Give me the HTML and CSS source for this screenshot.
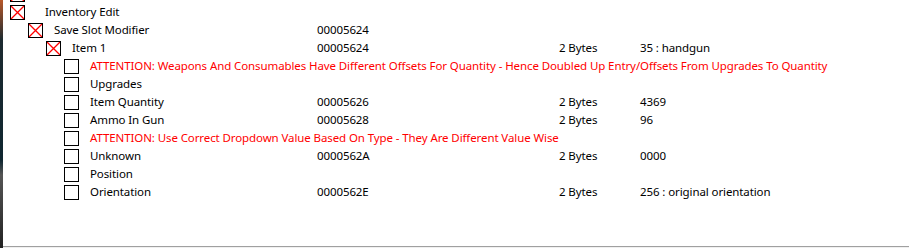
FILE: index.html
```html
<!DOCTYPE html>
<html>
<head>
    <title>Cheat Table</title>
    <link rel="stylesheet" href="styles.css">
</head>
<body>
    <div class="desktop"></div>
    <div class="table">
        <div class="tree">
            <div class="row">
                <div class="desc lvl-0"><span class="box checked"><svg viewBox="0 0 13 13"><path d="M0 0L13 13M13 0L0 13" stroke="#ff0000" stroke-width="1.3" fill="none"/></svg></span></div>
            </div>
            <div class="row">
                <div class="desc lvl-0 wide-gap"><span class="box checked"><svg viewBox="0 0 13 13"><path d="M0 0L13 13M13 0L0 13" stroke="#ff0000" stroke-width="1.3" fill="none"/></svg></span><span>Inventory Edit</span></div>
            </div>
            <div class="row">
                <div class="desc lvl-1"><span class="box checked"><svg viewBox="0 0 13 13"><path d="M0 0L13 13M13 0L0 13" stroke="#ff0000" stroke-width="1.3" fill="none"/></svg></span><span>Save Slot Modifier</span></div>
                <div>00005624</div>
            </div>
            <div class="row">
                <div class="desc lvl-2"><span class="box checked"><svg viewBox="0 0 13 13"><path d="M0 0L13 13M13 0L0 13" stroke="#ff0000" stroke-width="1.3" fill="none"/></svg></span><span>Item 1</span></div>
                <div>00005624</div>
                <div>2 Bytes</div>
                <div>35 : handgun</div>
            </div>
            <div class="row note">
                <div class="desc lvl-3"><span class="box"></span><span>ATTENTION: Weapons And Consumables Have Different Offsets For Quantity - Hence Doubled Up Entry/Offsets From Upgrades To Quantity</span></div>
            </div>
            <div class="row">
                <div class="desc lvl-3"><span class="box"></span><span>Upgrades</span></div>
            </div>
            <div class="row">
                <div class="desc lvl-3"><span class="box"></span><span>Item Quantity</span></div>
                <div>00005626</div>
                <div>2 Bytes</div>
                <div>4369</div>
            </div>
            <div class="row">
                <div class="desc lvl-3"><span class="box"></span><span>Ammo In Gun</span></div>
                <div>00005628</div>
                <div>2 Bytes</div>
                <div>96</div>
            </div>
            <div class="row note">
                <div class="desc lvl-3"><span class="box"></span><span>ATTENTION: Use Correct Dropdown Value Based On Type - They Are Different Value Wise</span></div>
            </div>
            <div class="row">
                <div class="desc lvl-3"><span class="box"></span><span>Unknown</span></div>
                <div>0000562A</div>
                <div>2 Bytes</div>
                <div>0000</div>
            </div>
            <div class="row">
                <div class="desc lvl-3"><span class="box"></span><span>Position</span></div>
            </div>
            <div class="row">
                <div class="desc lvl-3"><span class="box"></span><span>Orientation</span></div>
                <div>0000562E</div>
                <div>2 Bytes</div>
                <div>256 : original orientation</div>
            </div>
        </div>
    </div>
</body>
</html>
```

FILE: styles.css
```css
body {
    margin: 0;
    display: flex;
    height: 248px;
    overflow: hidden;
    font-family: 'Noto Sans', sans-serif;
    font-size: 11.5px;
    letter-spacing: -0.1px;
    color: #000;
    background: #f0f0f0;
}

.desktop {
    width: 3px;
    background: linear-gradient(to bottom, #b8582a 0px, #1c2a30 40px, #0f2630 160px, #555 175px, #222 248px);
}

.table {
    flex: 1;
    height: 246px;
    background: #fff;
    border-bottom: 1px solid #a0a0a0;
    overflow: hidden;
}

.tree {
    margin-top: -15px;
}

.row {
    display: grid;
    grid-template-columns: 314px 242px 81px auto;
    height: 18px;
    line-height: 18px;
    white-space: nowrap;
}

.note .desc {
    grid-column: 1 / -1;
    color: #ff0000;
}

.desc {
    display: flex;
    align-items: center;
    gap: 11px;
}

.desc.wide-gap {
    gap: 20px;
}

.lvl-0 { padding-left: 7px; }
.lvl-1 { padding-left: 25px; }
.lvl-2 { padding-left: 43px; }
.lvl-3 { padding-left: 61px; }

.box {
    flex: none;
    display: flex;
    width: 13px;
    height: 13px;
    border: 1px solid #000;
    background: #fff;
}

.box svg {
    width: 13px;
    height: 13px;
}
```
